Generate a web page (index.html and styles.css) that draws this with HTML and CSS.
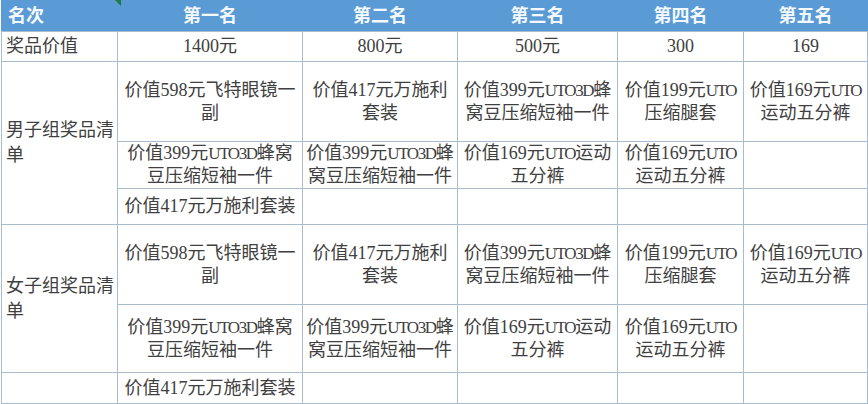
FILE: index.html
```html
<!DOCTYPE html>
<html lang="zh-CN">
<head>
<meta charset="utf-8">
<title>奖品清单</title>
<link rel="stylesheet" href="styles.css">
</head>
<body>
<div class="sheet">
  <span class="marker"></span>
  <table class="prizes">
    <colgroup>
      <col class="c0"><col class="c1"><col class="c2"><col class="c3"><col class="c4"><col class="c5">
    </colgroup>
    <thead>
      <tr class="r-head">
        <th class="lead">名次</th>
        <th>第一名</th>
        <th>第二名</th>
        <th>第三名</th>
        <th>第四名</th>
        <th>第五名</th>
      </tr>
    </thead>
    <tbody>
      <tr class="r-price">
        <td class="lead">奖品价值</td>
        <td>1400元</td>
        <td>800元</td>
        <td>500元</td>
        <td>300</td>
        <td>169</td>
      </tr>
      <tr class="r-a">
        <td class="lead group" rowspan="3">男子组奖品清<br>单</td>
        <td>价值598元飞特眼镜一<br>副</td>
        <td>价值417元万施利<br>套装</td>
        <td>价值399元<span class="lat">UTO3D</span>蜂<br>窝豆压缩短袖一件</td>
        <td>价值199元<span class="lat">UTO</span><br>压缩腿套</td>
        <td>价值169元<span class="lat">UTO</span><br>运动五分裤</td>
      </tr>
      <tr class="r-b">
        <td>价值399元<span class="lat">UTO3D</span>蜂窝<br>豆压缩短袖一件</td>
        <td>价值399元<span class="lat">UTO3D</span>蜂<br>窝豆压缩短袖一件</td>
        <td>价值169元<span class="lat">UTO</span>运动<br>五分裤</td>
        <td>价值169元<span class="lat">UTO</span><br>运动五分裤</td>
        <td></td>
      </tr>
      <tr class="r-c">
        <td>价值417元万施利套装</td>
        <td></td>
        <td></td>
        <td></td>
        <td></td>
      </tr>
      <tr class="r-a">
        <td class="lead group" rowspan="2">女子组奖品清<br>单</td>
        <td>价值598元飞特眼镜一<br>副</td>
        <td>价值417元万施利<br>套装</td>
        <td>价值399元<span class="lat">UTO3D</span>蜂<br>窝豆压缩短袖一件</td>
        <td>价值199元<span class="lat">UTO</span><br>压缩腿套</td>
        <td>价值169元<span class="lat">UTO</span><br>运动五分裤</td>
      </tr>
      <tr class="r-d">
        <td>价值399元<span class="lat">UTO3D</span>蜂窝<br>豆压缩短袖一件</td>
        <td>价值399元<span class="lat">UTO3D</span>蜂<br>窝豆压缩短袖一件</td>
        <td>价值169元<span class="lat">UTO</span>运动<br>五分裤</td>
        <td>价值169元<span class="lat">UTO</span><br>运动五分裤</td>
        <td></td>
      </tr>
      <tr class="r-e">
        <td class="lead"></td>
        <td>价值417元万施利套装</td>
        <td></td>
        <td></td>
        <td></td>
        <td></td>
      </tr>
    </tbody>
  </table>
</div>
</body>
</html>
```

FILE: styles.css
```css
html, body {
  margin: 0;
  padding: 0;
  background: #ffffff;
}

.sheet {
  position: relative;
  width: 868px;
  height: 404px;
  overflow: hidden;
}

.marker {
  position: absolute;
  left: 115px;
  top: 0;
  width: 0;
  height: 0;
  border-top: 6px solid #1f7a4a;
  border-left: 6px solid transparent;
}

.prizes {
  border-collapse: collapse;
  table-layout: fixed;
  width: 866px;
  margin-left: 1px;
  font-family: "Liberation Serif", "Noto Sans CJK SC", serif;
  font-size: 18px;
  line-height: 23px;
  color: #404040;
}

.c0 { width: 116px; }
.c1 { width: 185px; }
.c2 { width: 155px; }
.c3 { width: 160px; }
.c4 { width: 126px; }
.c5 { width: 124px; }

.prizes th,
.prizes td {
  border: 1px solid #a9bccd;
  padding: 0 1px;
  text-align: center;
  vertical-align: middle;
  white-space: nowrap;
  overflow: hidden;
}

.prizes th {
  background: #5b9bd5;
  color: #f4f9ff;
  font-weight: bold;
  border-color: #5b9bd5;
  border-bottom-color: #a9bccd;
}

.prizes .lead {
  text-align: left;
  padding-left: 4px;
  padding-right: 0;
}

.prizes th.lead {
  padding-left: 6px;
}

.lat {
  font-family: "Liberation Serif", serif;
  font-size: 17px;
  letter-spacing: -1.4px;
}

.r-head { height: 31px; }
.r-price { height: 30px; }
.r-a { height: 80px; }
.r-b { height: 47px; }
.r-c { height: 36px; }
.r-d { height: 68px; }
.r-e { height: 31px; }

.group {
  line-height: 25px;
}
```
